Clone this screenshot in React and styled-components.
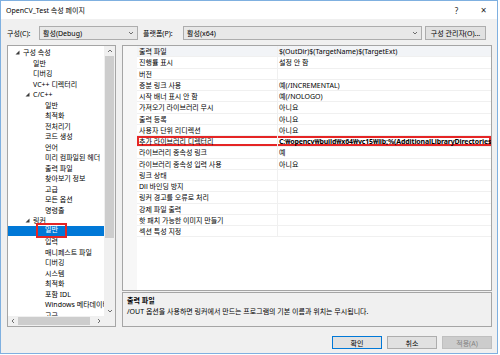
import styled, { createGlobalStyle } from "styled-components";

const Global = createGlobalStyle`
  body {
    margin: 0;
    background: #fff;
    font-family: "Noto Sans", "Noto Sans CJK KR", sans-serif;
    font-size: 7px;
    color: #000;
  }
`;

const Window = styled.div`
  width: 498px;
  height: 354px;
  box-sizing: border-box;
  border: 1px solid #7fb0e0;
  display: flex;
  flex-direction: column;
  background: #f0f0f0;
`;

const TitleBar = styled.div`
  height: 18px;
  background: #fff;
  display: flex;
  align-items: center;
  padding: 0 0 0 5px;
`;

const TitleText = styled.div`
  flex: 1;
`;

const TitleButton = styled.div`
  width: 27px;
  text-align: center;
  font-size: ${(p) => p.size || 8}px;
  color: #222;
`;

const Body = styled.div`
  flex: 1;
  display: flex;
  flex-direction: column;
  padding: 7px 5px 0 6px;
`;

const Toolbar = styled.div`
  display: flex;
  align-items: center;
  height: 14px;
`;

const Label = styled.span`
  width: ${(p) => p.w}px;
  margin-left: ${(p) => p.gap || 0}px;
  flex: none;
`;

const Combo = styled.div`
  width: ${(p) => p.w}px;
  height: 14px;
  box-sizing: border-box;
  border: 1px solid #adadad;
  background: #e8e8e8;
  display: flex;
  align-items: center;
  padding: 0 3px 0 3px;
  flex: none;
`;

const ComboText = styled.span`
  flex: 1;
`;

const Button = styled.div`
  width: ${(p) => p.w}px;
  height: ${(p) => p.h || 14}px;
  margin-left: ${(p) => p.gap || 0}px;
  box-sizing: border-box;
  border: 1px solid ${(p) => (p.primary ? "#0078d7" : p.disabled ? "#bfbfbf" : "#adadad")};
  background: ${(p) => (p.disabled ? "#cccccc" : "#e1e1e1")};
  color: ${(p) => (p.disabled ? "#838383" : "#000")};
  display: flex;
  align-items: center;
  justify-content: center;
  flex: none;
`;

const Main = styled.div`
  display: flex;
  gap: 6px;
  margin-top: 5px;
  height: 282px;
`;

const TreeBox = styled.div`
  width: 109px;
  box-sizing: border-box;
  border: 1px solid #a5a5a5;
  background: #fff;
  display: grid;
  grid-template-columns: 96px 11px;
  grid-template-rows: 270px 10px;
`;

const TreeList = styled.div`
  overflow: hidden;
  padding-top: 1px;
`;

const TreeItem = styled.div`
  height: 10.5px;
  display: flex;
  align-items: center;
  white-space: nowrap;
  padding-left: ${(p) => p.indent}px;
  background: ${(p) => (p.selected ? "#0078d7" : "transparent")};
  color: ${(p) => (p.selected ? "#fff" : "#000")};
`;

const Expander = styled.span`
  width: 8px;
  flex: none;
  display: flex;
  align-items: center;
`;

const Marked = styled.span`
  border: 2px solid #e52525;
  padding: 1px 7px 2px;
  margin: 0 -9px;
  line-height: 8px;
`;

const VScroll = styled.div`
  background: #f0f0f0;
  display: flex;
  flex-direction: column;
  align-items: stretch;
`;

const HScroll = styled.div`
  background: #f0f0f0;
  display: flex;
  align-items: center;
`;

const Arrow = styled.div`
  flex: none;
  width: ${(p) => (p.horizontal ? "10px" : "auto")};
  height: ${(p) => (p.horizontal ? "auto" : "10px")};
  display: flex;
  align-items: center;
  justify-content: center;
`;

const Thumb = styled.div`
  background: #cdcdcd;
  margin: ${(p) => (p.horizontal ? "1px 0" : "0 1px")};
  ${(p) => (p.horizontal ? "width: 72px; height: 8px;" : "height: 182px;")}
`;

const Track = styled.div`
  flex: 1;
`;

const Corner = styled.div`
  background: #f0f0f0;
`;

const RightCol = styled.div`
  width: 370px;
  display: flex;
  flex-direction: column;
  gap: 1px;
`;

const Grid = styled.div`
  height: 246px;
  box-sizing: border-box;
  border: 1px solid #a5a5a5;
  background: #fff;
  display: grid;
  grid-template-columns: 14px 1fr;
`;

const Margin = styled.div`
  background: #f7f7f7;
`;

const Rows = styled.div`
  display: flex;
  flex-direction: column;
`;

const Row = styled.div`
  height: 11.25px;
  box-sizing: border-box;
  display: grid;
  grid-template-columns: 141px 1fr;
  border-bottom: 1px solid #f0f0f0;
  background: ${(p) => (p.current ? "#f2f4f7" : "#fff")};
  box-shadow: ${(p) => (p.marked ? "inset 0 0 0 2px #e52525" : "none")};
`;

const Cell = styled.div`
  display: flex;
  align-items: center;
  padding-left: ${(p) => p.pad}px;
  white-space: nowrap;
  overflow: hidden;
  border-right: ${(p) => (p.divider ? "1px solid #f0f0f0" : "none")};
  font-weight: ${(p) => (p.bold ? 700 : 400)};
  letter-spacing: ${(p) => (p.bold ? "-0.15px" : "normal")};
`;

const Desc = styled.div`
  flex: 1;
  box-sizing: border-box;
  border: 1px solid #a5a5a5;
  padding: 2px 4px;
  line-height: 11px;
`;

const DescTitle = styled.div`
  font-weight: 700;
`;

const Footer = styled.div`
  display: flex;
  justify-content: flex-end;
  gap: 5px;
  margin-top: 9px;
`;

const Chevron = ({ dir = "down", size = 6 }) => {
  const pts = {
    down: "1,2 3,4 5,2",
    up: "1,4 3,2 5,4",
    left: "4,1 2,3 4,5",
    right: "2,1 4,3 2,5",
  }[dir];
  return (
    <svg width={size} height={size} viewBox="0 0 6 6">
      <polyline points={pts} fill="none" stroke="#606060" strokeWidth="0.9" />
    </svg>
  );
};

// expanded-node marker of the Windows tree view
const Tri = () => (
  <svg width="5" height="5" viewBox="0 0 5 5">
    <polygon points="4.5,0.5 4.5,4.5 0.5,4.5" fill="#3c3c3c" />
  </svg>
);

const indents = [7, 17, 29];

const tree = [
  { t: "구성 속성", l: 0, e: true },
  { t: "일반", l: 1 },
  { t: "디버깅", l: 1 },
  { t: "VC++ 디렉터리", l: 1 },
  { t: "C/C++", l: 1, e: true },
  { t: "일반", l: 2 },
  { t: "최적화", l: 2 },
  { t: "전처리기", l: 2 },
  { t: "코드 생성", l: 2 },
  { t: "언어", l: 2 },
  { t: "미리 컴파일된 헤더", l: 2 },
  { t: "출력 파일", l: 2 },
  { t: "찾아보기 정보", l: 2 },
  { t: "고급", l: 2 },
  { t: "모든 옵션", l: 2 },
  { t: "명령줄", l: 2 },
  { t: "링커", l: 1, e: true },
  { t: "일반", l: 2, sel: true },
  { t: "입력", l: 2 },
  { t: "매니페스트 파일", l: 2 },
  { t: "디버깅", l: 2 },
  { t: "시스템", l: 2 },
  { t: "최적화", l: 2 },
  { t: "포함 IDL", l: 2 },
  { t: "Windows 메타데이터", l: 2 },
  { t: "고급", l: 2 },
];

const props = [
  ["출력 파일", "$(OutDir)$(TargetName)$(TargetExt)"],
  ["진행률 표시", "설정 안 함"],
  ["버전", ""],
  ["증분 링크 사용", "예(/INCREMENTAL)"],
  ["시작 배너 표시 안 함", "예(/NOLOGO)"],
  ["가져오기 라이브러리 무시", "아니요"],
  ["출력 등록", "아니요"],
  ["사용자 단위 리디렉션", "아니요"],
  ["추가 라이브러리 디렉터리", "C:₩opencv₩build₩x64₩vc15₩lib;%(AdditionalLibraryDirectories)"],
  ["라이브러리 종속성 링크", "예"],
  ["라이브러리 종속성 입력 사용", "아니요"],
  ["링크 상태", ""],
  ["Dll 바인딩 방지", ""],
  ["링커 경고를 오류로 처리", ""],
  ["강제 파일 출력", ""],
  ["핫 패치 가능한 이미지 만들기", ""],
  ["섹션 특성 지정", ""],
];

export default function App() {
  return (
    <Window>
      <Global />
      <TitleBar>
        <TitleText>OpenCV_Test 속성 페이지</TitleText>
        <TitleButton>?</TitleButton>
        <TitleButton size={10}>×</TitleButton>
      </TitleBar>
      <Body>
        <Toolbar>
          <Label w={32}>구성(C):</Label>
          <Combo w={99}>
            <ComboText>활성(Debug)</ComboText>
            <Chevron />
          </Combo>
          <Label w={40} gap={5}>플랫폼(P):</Label>
          <Combo w={239}>
            <ComboText>활성(x64)</ComboText>
            <Chevron />
          </Combo>
          <Button w={61} gap={3}>구성 관리자(O)...</Button>
        </Toolbar>
        <Main>
          <TreeBox>
            <TreeList>
              {tree.map((n, i) => (
                <TreeItem key={i} indent={indents[n.l]} selected={n.sel}>
                  <Expander>{n.e && <Tri />}</Expander>
                  {n.sel ? <Marked>{n.t}</Marked> : n.t}
                </TreeItem>
              ))}
            </TreeList>
            <VScroll>
              <Arrow><Chevron dir="up" /></Arrow>
              <Thumb />
              <Track />
              <Arrow><Chevron dir="down" /></Arrow>
            </VScroll>
            <HScroll>
              <Arrow horizontal><Chevron dir="left" /></Arrow>
              <Thumb horizontal />
              <Track />
              <Arrow horizontal><Chevron dir="right" /></Arrow>
            </HScroll>
            <Corner />
          </TreeBox>
          <RightCol>
            <Grid>
              <Margin />
              <Rows>
                {props.map(([name, value], i) => (
                  <Row key={i} current={i === 0} marked={i === 8}>
                    <Cell pad={2} divider>{name}</Cell>
                    <Cell pad={1} bold={i === 8}>{value}</Cell>
                  </Row>
                ))}
              </Rows>
            </Grid>
            <Desc>
              <DescTitle>출력 파일</DescTitle>
              <div>/OUT 옵션을 사용하면 링커에서 만드는 프로그램의 기본 이름과 위치는 무시됩니다.</div>
            </Desc>
          </RightCol>
        </Main>
        <Footer>
          <Button w={50} h={13} primary>확인</Button>
          <Button w={50} h={13}>취소</Button>
          <Button w={50} h={13} disabled>적용(A)</Button>
        </Footer>
      </Body>
    </Window>
  );
}
